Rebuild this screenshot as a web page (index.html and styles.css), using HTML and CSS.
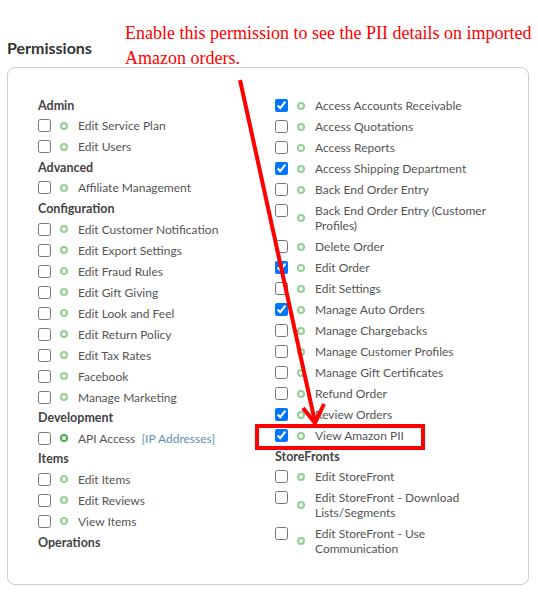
FILE: index.html
```html
<!DOCTYPE html>
<html lang="en">
<head>
  <meta charset="UTF-8">
  <title>Permissions</title>
  <link rel="stylesheet" href="styles.css">
</head>
<body>
  <div class="page">
    <h2 class="title">Permissions</h2>
    <div class="perm-box">
      <div class="perm-col">
        <div class="group">Admin</div>
        <label class="perm"><input type="checkbox"><span class="dot"></span><span class="name">Edit Service Plan</span></label>
        <label class="perm"><input type="checkbox"><span class="dot"></span><span class="name">Edit Users</span></label>
        <div class="group">Advanced</div>
        <label class="perm"><input type="checkbox"><span class="dot"></span><span class="name">Affiliate Management</span></label>
        <div class="group">Configuration</div>
        <label class="perm"><input type="checkbox"><span class="dot"></span><span class="name">Edit Customer Notification</span></label>
        <label class="perm"><input type="checkbox"><span class="dot"></span><span class="name">Edit Export Settings</span></label>
        <label class="perm"><input type="checkbox"><span class="dot"></span><span class="name">Edit Fraud Rules</span></label>
        <label class="perm"><input type="checkbox"><span class="dot"></span><span class="name">Edit Gift Giving</span></label>
        <label class="perm"><input type="checkbox"><span class="dot"></span><span class="name">Edit Look and Feel</span></label>
        <label class="perm"><input type="checkbox"><span class="dot"></span><span class="name">Edit Return Policy</span></label>
        <label class="perm"><input type="checkbox"><span class="dot"></span><span class="name">Edit Tax Rates</span></label>
        <label class="perm"><input type="checkbox"><span class="dot"></span><span class="name">Facebook</span></label>
        <label class="perm"><input type="checkbox"><span class="dot"></span><span class="name">Manage Marketing</span></label>
        <div class="group">Development</div>
        <label class="perm"><input type="checkbox"><span class="dot dark"></span><span class="name">API Access <a class="link">[IP Addresses]</a></span></label>
        <div class="group">Items</div>
        <label class="perm"><input type="checkbox"><span class="dot"></span><span class="name">Edit Items</span></label>
        <label class="perm"><input type="checkbox"><span class="dot"></span><span class="name">Edit Reviews</span></label>
        <label class="perm"><input type="checkbox"><span class="dot"></span><span class="name">View Items</span></label>
        <div class="group">Operations</div>
      </div>
      <div class="perm-col">
        <label class="perm"><input type="checkbox" checked><span class="dot"></span><span class="name">Access Accounts Receivable</span></label>
        <label class="perm"><input type="checkbox"><span class="dot"></span><span class="name">Access Quotations</span></label>
        <label class="perm"><input type="checkbox"><span class="dot"></span><span class="name">Access Reports</span></label>
        <label class="perm"><input type="checkbox" checked><span class="dot"></span><span class="name">Access Shipping Department</span></label>
        <label class="perm"><input type="checkbox"><span class="dot"></span><span class="name">Back End Order Entry</span></label>
        <label class="perm"><input type="checkbox"><span class="dot"></span><span class="name">Back End Order Entry (Customer Profiles)</span></label>
        <label class="perm"><input type="checkbox"><span class="dot"></span><span class="name">Delete Order</span></label>
        <label class="perm"><input type="checkbox" checked><span class="dot"></span><span class="name">Edit Order</span></label>
        <label class="perm"><input type="checkbox"><span class="dot"></span><span class="name">Edit Settings</span></label>
        <label class="perm"><input type="checkbox" checked><span class="dot"></span><span class="name">Manage Auto Orders</span></label>
        <label class="perm"><input type="checkbox"><span class="dot"></span><span class="name">Manage Chargebacks</span></label>
        <label class="perm"><input type="checkbox"><span class="dot"></span><span class="name">Manage Customer Profiles</span></label>
        <label class="perm"><input type="checkbox"><span class="dot"></span><span class="name">Manage Gift Certificates</span></label>
        <label class="perm"><input type="checkbox"><span class="dot"></span><span class="name">Refund Order</span></label>
        <label class="perm"><input type="checkbox" checked><span class="dot"></span><span class="name">Review Orders</span></label>
        <label class="perm"><input type="checkbox" checked><span class="dot"></span><span class="name">View Amazon PII</span></label>
        <div class="group">StoreFronts</div>
        <label class="perm"><input type="checkbox"><span class="dot"></span><span class="name">Edit StoreFront</span></label>
        <label class="perm"><input type="checkbox"><span class="dot"></span><span class="name">Edit StoreFront - Download Lists/Segments</span></label>
        <label class="perm"><input type="checkbox"><span class="dot"></span><span class="name">Edit StoreFront - Use Communication</span></label>
      </div>
    </div>

    <!-- annotation drawn on top of the screenshot -->
    <div class="note">Enable this permission to see the PII details on imported Amazon orders.</div>
    <div class="highlight"></div>
    <svg class="arrow" width="538" height="595" viewBox="0 0 538 595">
      <line x1="240" y1="80" x2="315" y2="422" stroke="#ff0000" stroke-width="4"/>
      <polyline points="303,408 315,423 324,404" fill="none" stroke="#ff0000" stroke-width="4"/>
    </svg>
  </div>
</body>
</html>
```

FILE: styles.css
```css
html, body {
  margin: 0;
  padding: 0;
}
body {
  background: #fff;
  font-family: Lato, "Liberation Sans", sans-serif;
  color: #555;
}
.page {
  position: relative;
  width: 538px;
  height: 595px;
  padding: 39px 9px 0 7px;
  box-sizing: border-box;
}
.title {
  margin: 0 0 10px;
  font-size: 16px;
  font-weight: 700;
  color: #333;
  line-height: 18px;
}
.perm-box {
  display: flex;
  border: 1px solid #ccc;
  border-radius: 8px;
  height: 518px;
  box-sizing: border-box;
  padding: 27px 0 0 30px;
}
.perm-col {
  width: 237px;
  display: flex;
  flex-direction: column;
}
.group {
  font-size: 12.5px;
  font-weight: 700;
  color: #444;
  line-height: 15px;
  padding: 2.6px 0;
}
.perm {
  display: flex;
  align-items: flex-start;
  font-size: 12px;
  line-height: 15px;
  padding: 3px 0;
}
.perm input {
  margin: 1px 0 0;
  width: 13px;
  height: 13px;
  flex: none;
}
.dot {
  flex: none;
  align-self: center;
  width: 4px;
  height: 4px;
  border: 2px solid #92d092;
  border-radius: 50%;
  margin: 0 10px 0 9px;
}
.dot.dark {
  border-color: #4cae4c;
}
.name {
  max-width: 185px;
}
.link {
  color: #5b8fb9;
  margin-left: 3px;
}

.note {
  position: absolute;
  left: 125px;
  top: 21px;
  width: 413px;
  font-family: "Liberation Serif", serif;
  font-size: 18px;
  line-height: 25px;
  color: #ff0000;
}
.highlight {
  position: absolute;
  left: 255px;
  top: 424px;
  width: 162px;
  height: 18px;
  border: 4px solid #ff0000;
}
.arrow {
  position: absolute;
  left: 0;
  top: 0;
  pointer-events: none;
}
```
